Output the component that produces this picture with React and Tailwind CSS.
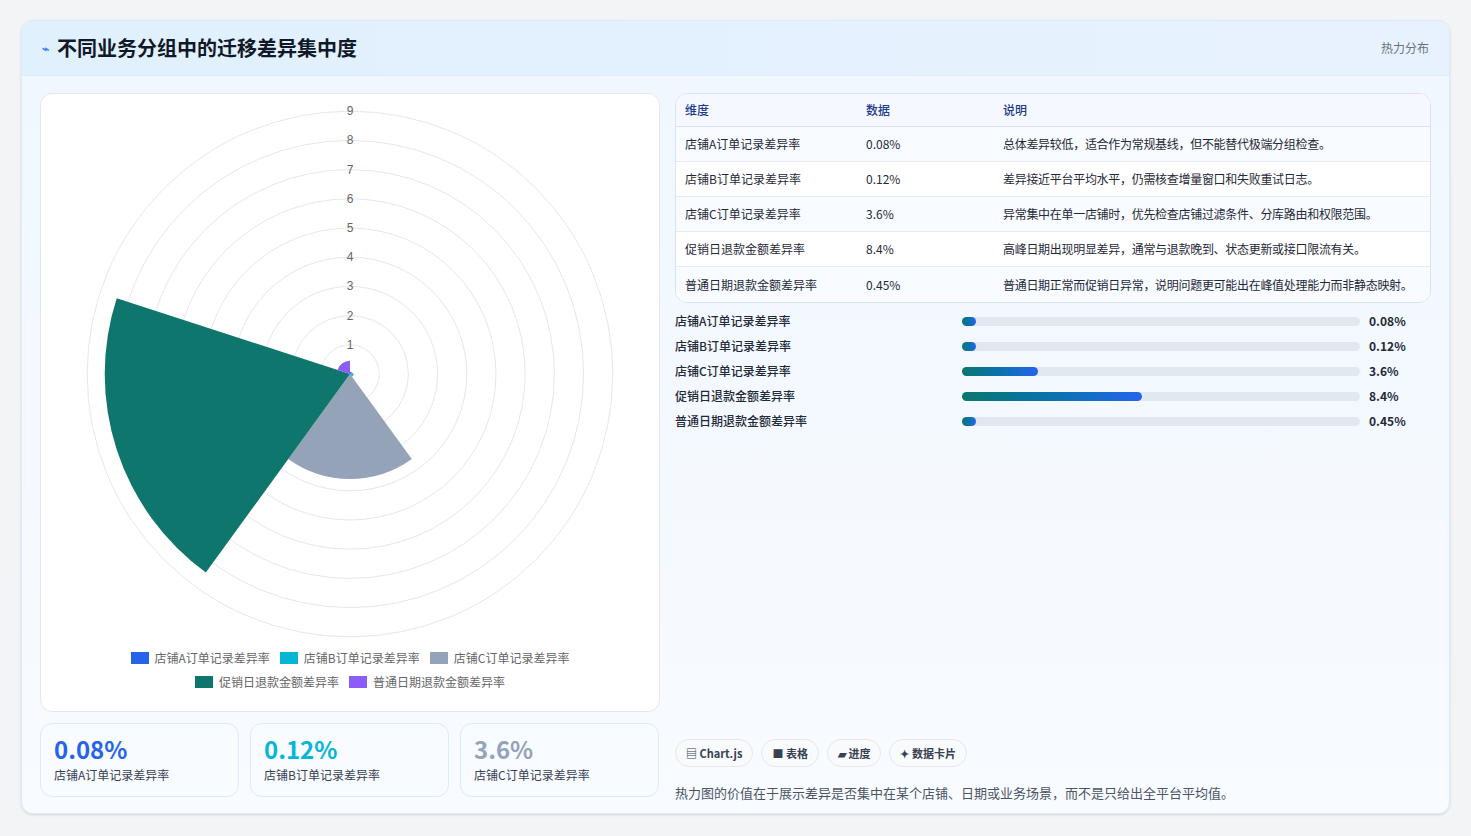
const F = { fontFamily: '"Noto Sans CJK SC", "Noto Sans", sans-serif' };

function Polar() {
  const cx = 310, cy = 270, u = 29.2;
  const data = [
    [0.08, '#2563eb'], [0.12, '#06b6d4'], [3.6, '#94a3b8'], [8.4, '#0f766e'], [0.45, '#8b5cf6'],
  ];
  const pt = (r, a) => [cx + r * Math.cos(a), cy + r * Math.sin(a)];
  const segs = data.map(([v, c], i) => {
    const a0 = -Math.PI / 2 + (i * 2 * Math.PI) / 5;
    const a1 = a0 + (2 * Math.PI) / 5;
    const r = v * u;
    const [x0, y0] = pt(r, a0), [x1, y1] = pt(r, a1);
    return <path key={i} d={`M${cx},${cy} L${x0},${y0} A${r},${r} 0 0 1 ${x1},${y1} Z`} fill={c} />;
  });
  return (
    <svg width="620" height="545" viewBox="0 0 620 545">
      {[1,2,3,4,5,6,7,8,9].map(k => <circle key={k} cx={cx} cy={cy} r={k*u} fill="none" stroke="#e5e7eb" strokeWidth="1" />)}
      {segs}
      {[1,2,3,4,5,6,7,8,9].map(k => (
        <text key={k} x={cx} y={cy - k*u + 4} textAnchor="middle" fontSize="12" fill="#666" fontFamily="Liberation Sans, sans-serif">{k}</text>
      ))}
    </svg>
  );
}

const rows = [
  ['店铺A订单记录差异率','0.08%','总体差异较低，适合作为常规基线，但不能替代极端分组检查。'],
  ['店铺B订单记录差异率','0.12%','差异接近平台平均水平，仍需核查增量窗口和失败重试日志。'],
  ['店铺C订单记录差异率','3.6%','异常集中在单一店铺时，优先检查店铺过滤条件、分库路由和权限范围。'],
  ['促销日退款金额差异率','8.4%','高峰日期出现明显差异，通常与退款晚到、状态更新或接口限流有关。'],
  ['普通日期退款金额差异率','0.45%','普通日期正常而促销日异常，说明问题更可能出在峰值处理能力而非静态映射。'],
];
const bars = [['店铺A订单记录差异率','0.08%',14],['店铺B订单记录差异率','0.12%',14],['店铺C订单记录差异率','3.6%',76],['促销日退款金额差异率','8.4%',180],['普通日期退款金额差异率','0.45%',14]];

export default function App() {
  return (
    <div style={F} className="w-[1471px] h-[836px] bg-[#f3f4f6] pt-[20px] pl-[21px]">
      <div className="w-[1429px] h-[794px] rounded-xl border border-[#dbeafe] bg-gradient-to-b from-[#f0f7ff] to-[#f8fbff] overflow-hidden shadow-sm">
        <div className="h-[55px] bg-gradient-to-r from-[#e0f0fd] to-[#e8f2fe] border-b border-[#dbeafe] flex items-center justify-between px-5">
          <div className="flex items-center gap-2">
            <span className="text-[#3b82f6] text-[12px] font-bold">⌁</span>
            <span className="text-[20px] font-bold text-[#111827]">不同业务分组中的迁移差异集中度</span>
          </div>
          <span className="text-[12px] text-[#6b7280]">热力分布</span>
        </div>
        <div className="flex gap-[15px] px-[18px] pt-[17px]">
          <div className="w-[620px] flex flex-col gap-[11px]">
            <div className="h-[619px] bg-white rounded-xl border border-[#e5e7eb] flex flex-col items-center">
              <div className="pt-[10px]"><Polar /></div>
              <div className="flex flex-col items-center gap-[6px] text-[12px] text-[#666]">
                <div className="flex gap-[10px]">
                  {[['#2563eb','店铺A订单记录差异率'],['#06b6d4','店铺B订单记录差异率'],['#94a3b8','店铺C订单记录差异率']].map(([c,t])=>(
                    <span key={t} className="flex items-center gap-[6px]"><span className="w-[18px] h-[12px]" style={{background:c}} />{t}</span>
                  ))}
                </div>
                <div className="flex gap-[10px]">
                  {[['#0f766e','促销日退款金额差异率'],['#8b5cf6','普通日期退款金额差异率']].map(([c,t])=>(
                    <span key={t} className="flex items-center gap-[6px]"><span className="w-[18px] h-[12px]" style={{background:c}} />{t}</span>
                  ))}
                </div>
              </div>
            </div>
            <div className="flex gap-[11px]">
              {[['0.08%','text-[#2563eb]','店铺A订单记录差异率'],['0.12%','text-[#06b6d4]','店铺B订单记录差异率'],['3.6%','text-[#94a3b8]','店铺C订单记录差异率']].map(([v,c,t])=>(
                <div key={t} className="w-[199px] h-[74px] rounded-xl border border-[#dbeafe] bg-[#f8fbff] px-[13px] pt-[10px]">
                  <div className={`text-[24px] font-bold leading-[30px] ${c}`}>{v}</div>
                  <div className="text-[12px] text-[#374151] mt-[2px]">{t}</div>
                </div>
              ))}
            </div>
          </div>
          <div className="w-[758px] flex flex-col">
            <div className="rounded-xl border border-[#dbe3ee] bg-white overflow-hidden text-[12px]">
              <div className="flex h-[33px] items-center bg-[#f5f9ff] border-b border-[#dbe3ee] text-[#1e3a8a] font-medium px-[9px]">
                <span className="w-[181px]">维度</span><span className="w-[137px]">数据</span><span>说明</span>
              </div>
              {rows.map((r,i)=>(
                <div key={i} className={`flex h-[35px] items-center px-[9px] text-[#1f2937] whitespace-nowrap ${i<4?'border-b border-[#e5ebf3]':''} ${i%2===0?'bg-[#f8fbff]':'bg-white'}`}>
                  <span className="w-[181px]">{r[0]}</span><span className="w-[137px]">{r[1]}</span><span className="tracking-[-0.3px]">{r[2]}</span>
                </div>
              ))}
            </div>
            <div className="mt-[10px] flex flex-col gap-[9px] text-[12px]">
              {bars.map(([t,v,w])=>(
                <div key={t} className="flex items-center h-[16px]">
                  <span className="w-[287px] text-[#1f2937] font-medium">{t}</span>
                  <div className="w-[398px] h-[9px] rounded-full bg-[#e2e8f0]">
                    <div className="h-[9px] rounded-full bg-gradient-to-r from-[#0f766e] to-[#2563eb]" style={{width:w}} />
                  </div>
                  <span className="ml-[9px] font-bold text-[#1f2937]">{v}</span>
                </div>
              ))}
            </div>
            <div className="mt-[310px] flex gap-[8px] text-[11px] font-bold text-[#374151]">
              {['▤ Chart.js','■ 表格','▰ 进度','✦ 数据卡片'].map(t=>(
                <span key={t} className="h-[28px] px-[10px] rounded-full border border-[#e5e7eb] bg-[#f8fafc] flex items-center">{t}</span>
              ))}
            </div>
            <div className="mt-[16px] text-[13px] text-[#4b5563]">热力图的价值在于展示差异是否集中在某个店铺、日期或业务场景，而不是只给出全平台平均值。</div>
          </div>
        </div>
      </div>
    </div>
  );
}
